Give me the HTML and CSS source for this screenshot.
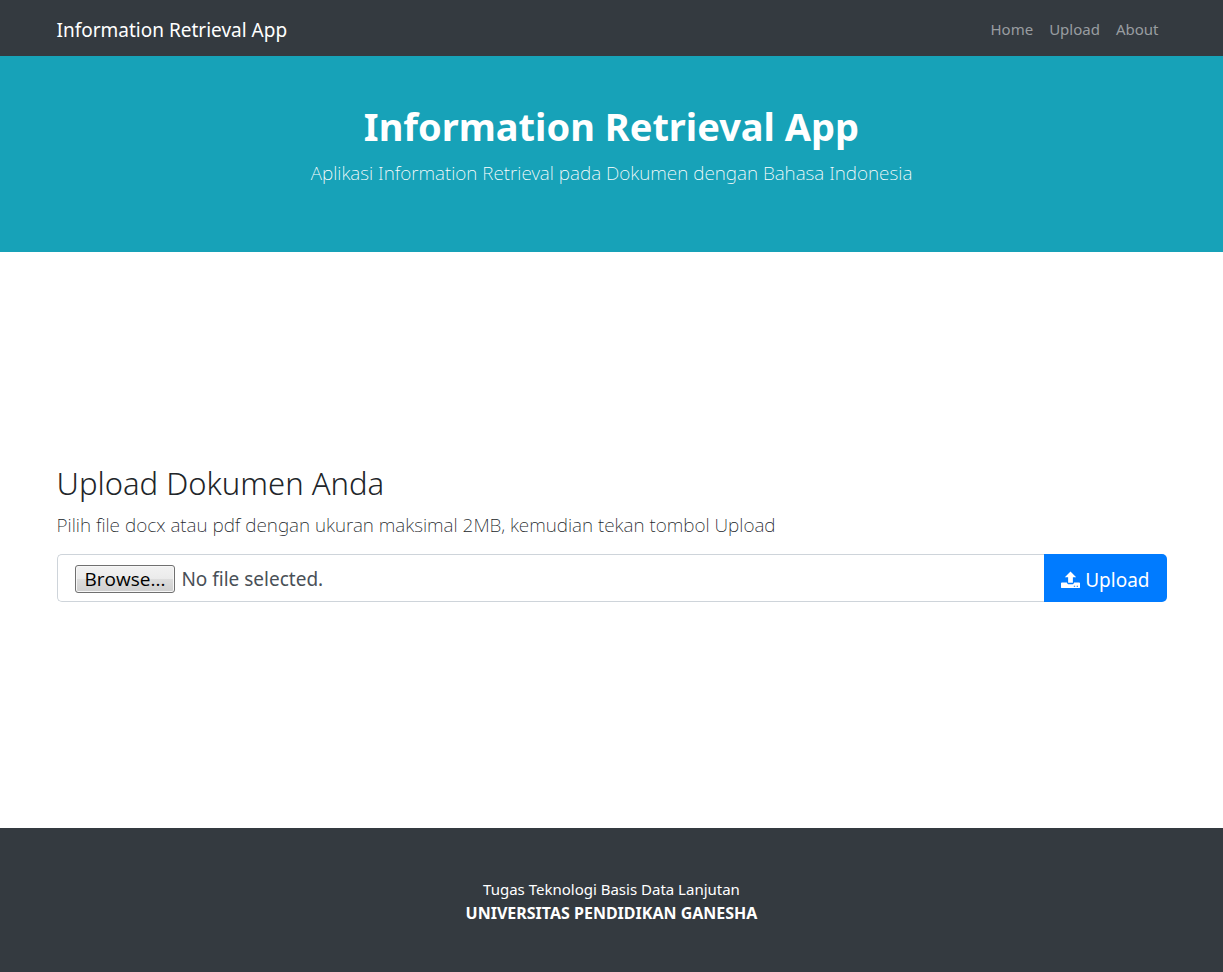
FILE: index.html
```html
<!DOCTYPE html>
<html lang="id">
<head>
<meta charset="utf-8">
<meta name="viewport" content="width=device-width, initial-scale=1">
<title>Information Retrieval App</title>
<link rel="stylesheet" href="styles.css">
</head>
<body>
<header class="navbar">
  <div class="container navbar-row">
    <a class="brand" href="#">Information Retrieval App</a>
    <nav class="nav">
      <a class="nav-link" href="#">Home</a>
      <a class="nav-link" href="#upload">Upload</a>
      <a class="nav-link" href="#about">About</a>
    </nav>
  </div>
</header>
<section class="hero">
  <div class="container">
    <h1 class="hero-title">Information Retrieval App</h1>
    <p class="hero-lead">Aplikasi Information Retrieval pada Dokumen dengan Bahasa Indonesia</p>
  </div>
</section>
<main class="main" id="upload">
  <div class="container">
    <h2 class="title">Upload Dokumen Anda</h2>
    <p class="lead">Pilih file docx atau pdf dengan ukuran maksimal 2MB, kemudian tekan tombol Upload</p>
    <form class="upload-form">
      <label class="file-field" for="document">
        <input class="file-input" type="file" id="document" accept=".docx,.pdf">
        <span class="browse">Browse...</span>
        <span class="file-name">No file selected.</span>
      </label>
      <button class="upload-button" type="button">
        <svg class="upload-icon" viewBox="0 0 20 18" aria-hidden="true">
          <path fill="currentColor" d="M10 0 16 6H12.500V12H7.500V6H4Z"/>
          <path fill="currentColor" fill-rule="evenodd" d="M1 11.500H6.200C6.600 12.800 7.300 13.500 8.500 13.500H11.500C12.700 13.500 13.400 12.800 13.800 11.500H19Q20 11.500 20 12.500V16.500Q20 17.500 19 17.500H1Q0 17.500 0 16.500V12.500Q0 11.500 1 11.500ZM13.500 15V16.200H14.900V15ZM16.500 15V16.200H17.900V15Z"/>
        </svg>
        <span>Upload</span>
      </button>
    </form>
  </div>
</main>
<footer class="footer" id="about">
  <p class="footer-line">Tugas Teknologi Basis Data Lanjutan</p>
  <p class="footer-line"><strong class="campus">UNIVERSITAS PENDIDIKAN GANESHA</strong></p>
</footer>
</body>
</html>
```
FILE: styles.css
```css
* {
  box-sizing: border-box;
}

body {
  margin: 0;
  min-height: 100vh;
  display: flex;
  flex-direction: column;
  background: #fff;
  color: #212529;
  font: 400 15px/24px "Noto Sans", "Open Sans", sans-serif;
}

h1, h2, p {
  margin: 0;
}

.container {
  width: 100%;
  max-width: 1140px;
  margin: 0 auto;
  padding: 0 15px;
}

.navbar {
  padding: 10px 0 6px;
  background: #343a40;
}

.navbar-row {
  display: flex;
  align-items: center;
  justify-content: space-between;
  min-height: 40px;
}

.brand {
  color: #fff;
  font-size: 19px;
  line-height: 30px;
  text-decoration: none;
}

.nav {
  display: flex;
}

.nav-link {
  padding: 7px 8px 9px;
  color: #999da0;
  text-decoration: none;
}

.hero {
  padding: 46px 0 64px;
  background: #17a2b8;
  color: #fff;
  text-align: center;
}

.hero-title {
  margin-bottom: 8px;
  font-size: 38px;
  line-height: 48px;
  font-weight: 700;
}

.hero-lead {
  font-size: 19px;
  line-height: 30px;
  font-weight: 200;
}

.main {
  flex: 1;
  display: flex;
  align-items: center;
  padding: 32px 0 46px;
}

.title {
  margin-bottom: 8px;
  font-size: 31px;
  line-height: 38px;
  font-weight: 300;
}

.lead {
  margin-bottom: 14px;
  font-size: 19px;
  line-height: 30px;
  font-weight: 200;
}

.upload-form {
  display: flex;
  min-height: 48px;
}

.file-field {
  position: relative;
  flex: 1;
  display: flex;
  align-items: center;
  gap: 6px;
  padding: 2px 17px 0;
  border: 1px solid #ced4da;
  border-right: 0;
  border-radius: 5px 0 0 5px;
  color: #495057;
  font-size: 19px;
  line-height: 28px;
}

.file-input {
  position: absolute;
  inset: 0;
  width: 100%;
  opacity: 0;
}

.browse {
  padding: 0 9px;
  border: 1px solid #707070;
  border-radius: 3px;
  background: linear-gradient(#f2f2f2 0%, #ebebeb 48%, #dddddd 50%, #cfcfcf 100%);
  box-shadow: inset 0 0 0 1px #f7f7f7;
  color: #000;
  font-family: "Open Sans", "Noto Sans", sans-serif;
  line-height: 26px;
}

.upload-button {
  display: flex;
  align-items: center;
  gap: 5px;
  padding: 3px 17px 0;
  border: 0;
  border-radius: 0 5px 5px 0;
  background: #007bff;
  color: #fff;
  font: 400 19px/30px "Noto Sans", "Open Sans", sans-serif;
}

.upload-icon {
  width: 19px;
  height: 18px;
}

.footer {
  padding: 49px 16px 47px;
  background: #343a40;
  color: #fff;
  text-align: center;
}

.campus {
  font-size: 16px;
}
```
